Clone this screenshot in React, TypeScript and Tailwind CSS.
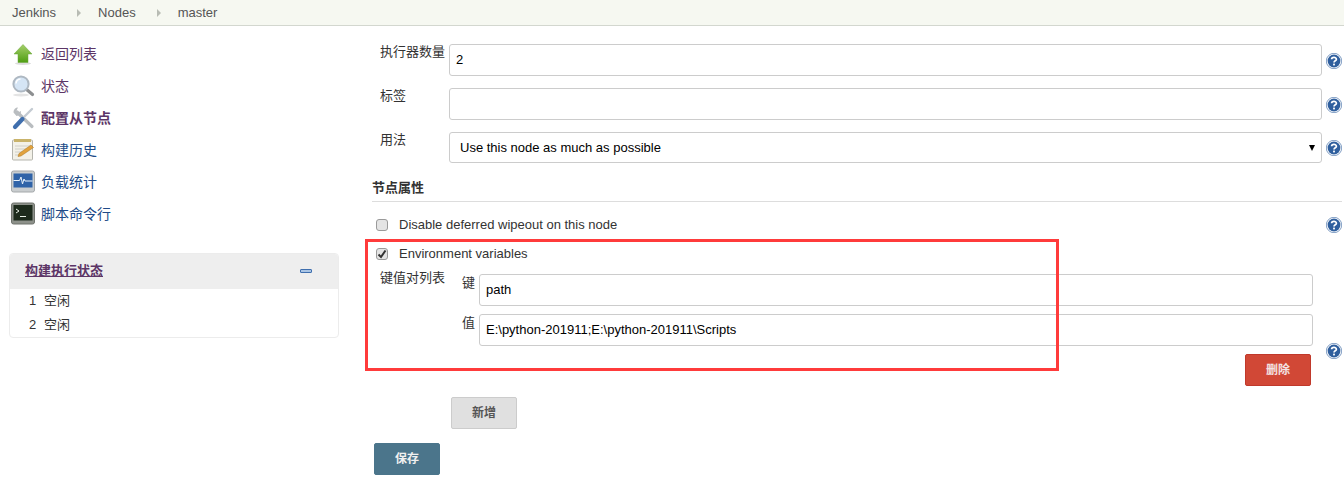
import React from 'react';

const font = { fontFamily: '"Liberation Sans", "Noto Sans CJK SC", sans-serif' };

function ArrowIcon() {
  return (
    <svg width="24" height="24" viewBox="0 0 24 24">
      <defs>
        <linearGradient id="up" x1="0" y1="0" x2="0" y2="1">
          <stop offset="0" stopColor="#a5cf6a" />
          <stop offset="1" stopColor="#4f9e12" />
        </linearGradient>
      </defs>
      <ellipse cx="12" cy="21.5" rx="8" ry="1.5" fill="#dcdcdc" />
      <path d="M12 2.5 L21 12 H17 V20.5 H7 V12 H3 Z" fill="url(#up)" stroke="#6aa63a" strokeWidth="0.5" />
    </svg>
  );
}

function SearchIcon() {
  return (
    <svg width="24" height="24" viewBox="0 0 24 24">
      <ellipse cx="10" cy="21" rx="8" ry="1.5" fill="#e4e4e4" />
      <path d="M15 15 L21.5 20.5" stroke="#8d8f91" strokeWidth="3.2" strokeLinecap="round" />
      <circle cx="10" cy="10" r="7.6" fill="#d5e5f5" stroke="#aeb8c2" strokeWidth="2" />
      <path d="M5 9.5 A5 5 0 0 1 9.5 5" stroke="#ffffff" strokeWidth="1.5" fill="none" />
    </svg>
  );
}

function ToolsIcon() {
  return (
    <svg width="24" height="24" viewBox="0 0 24 24">
      <path d="M6 6 L21 20.5" stroke="#b9bdc0" strokeWidth="3.2" strokeLinecap="round" />
      <path d="M2.5 6.5 A4.5 4.5 0 0 1 7 1.5 L5.5 4.5 L7 6.5 L10 5 A4.5 4.5 0 0 1 5.5 10 Z" fill="#b9bdc0" />
      <path d="M13 11 L21 3" stroke="#c4cbd2" strokeWidth="2.4" strokeLinecap="round" />
      <path d="M4 21 L11.5 13" stroke="#3f6fae" strokeWidth="4.2" strokeLinecap="round" />
    </svg>
  );
}

function NotepadIcon() {
  return (
    <svg width="24" height="24" viewBox="0 0 24 24">
      <rect x="1.5" y="2" width="20" height="20" rx="1" fill="#f3f1e8" stroke="#b5b5ad" />
      <rect x="3" y="1" width="17" height="3" fill="#c9b36a" />
      <path d="M4 8 H19 M4 11 H19 M4 14 H14 M4 17 H10" stroke="#cfcfc8" />
      <path d="M7 18.5 L8 15.5 L20 7 L22.5 9.5 L10 18 Z" fill="#e2a23c" stroke="#a8741e" strokeWidth="0.5" />
    </svg>
  );
}

function MonitorIcon() {
  return (
    <svg width="24" height="24" viewBox="0 0 24 24">
      <rect x="0.5" y="1" width="23" height="21" rx="2" fill="#c9cdcf" stroke="#a4a8aa" />
      <rect x="2.5" y="3.5" width="19" height="14" fill="#2f63a8" />
      <path d="M2.5 10.5 H8.5 L10 7 L11.5 14 L13 9 L14 11 H21.5" stroke="#e8f2fb" strokeWidth="1" fill="none" />
    </svg>
  );
}

function TerminalIcon() {
  return (
    <svg width="24" height="24" viewBox="0 0 24 24">
      <rect x="0.5" y="1" width="23" height="21" rx="2" fill="#8d918a" stroke="#6f736d" />
      <rect x="2.5" y="3" width="19" height="15.5" fill="#1d2b1c" />
      <path d="M5 7 L8 9 L5 11" stroke="#e8f0e6" strokeWidth="1" fill="none" />
      <path d="M9 14.5 H15" stroke="#e8f0e6" strokeWidth="1" />
    </svg>
  );
}

function HelpIcon() {
  return (
    <svg width="16" height="16" viewBox="0 0 16 16" className="shrink-0">
      <circle cx="8" cy="8" r="7.7" fill="#ffffff" stroke="#2f5f9e" strokeWidth="0.6" />
      <circle cx="8" cy="8" r="6.4" fill="#2f5f9e" />
      <path d="M5.6 6.2 C5.6 3.8 10.4 3.8 10.4 6.2 C10.4 7.8 8 7.8 8 9.6" fill="none" stroke="#ffffff" strokeWidth="1.7" />
      <rect x="7.1" y="10.6" width="1.8" height="1.8" fill="#ffffff" />
    </svg>
  );
}

const links = [
  { label: '返回列表', icon: <ArrowIcon />, color: 'text-[#5c3566]' },
  { label: '状态', icon: <SearchIcon />, color: 'text-[#5c3566]' },
  { label: '配置从节点', icon: <ToolsIcon />, color: 'text-[#5c3566] font-bold' },
  { label: '构建历史', icon: <NotepadIcon />, color: 'text-[#204a87]' },
  { label: '负载统计', icon: <MonitorIcon />, color: 'text-[#204a87]' },
  { label: '脚本命令行', icon: <TerminalIcon />, color: 'text-[#204a87]' },
];

function Sidebar() {
  return (
    <div className="w-[372px] shrink-0 pl-[9px] pt-[12px]">
      <div className="flex flex-col">
        {links.map(l => (
          <div key={l.label} className="flex h-[32px] items-center gap-[6px] pl-[2px]">
            {l.icon}
            <span className={`text-[14px] ${l.color}`}>{l.label}</span>
          </div>
        ))}
      </div>
      <div className="mt-[23px] w-[330px] overflow-hidden rounded-[4px] border border-[#ececec]">
        <div className="flex h-[35px] items-center justify-between bg-[#eeeeee] pb-[2px] pl-[15px] pr-[26px]">
          <span className="text-[13px] font-bold text-[#5c3566] underline">构建执行状态</span>
          <span className="h-[4px] w-[12px] rounded-[1px] border border-[#3f6fae] bg-[#a9c4e4]" />
        </div>
        <div className="flex h-[24px] items-center pl-[19px] text-[13px] text-[#333333]">
          <span className="w-[15px]">1</span>
          <span>空闲</span>
        </div>
        <div className="flex h-[24px] items-center pl-[19px] text-[13px] text-[#333333]">
          <span className="w-[15px]">2</span>
          <span>空闲</span>
        </div>
      </div>
    </div>
  );
}

function Field({ label, value, arrow }: { label: string; value?: string; arrow?: boolean }) {
  return (
    <div className="flex items-start">
      <div className="w-[77px] shrink-0 pl-[8px] text-[13px] leading-[15px] text-[#333333]">{label}</div>
      <div className={`flex w-[873px] shrink-0 items-center justify-between rounded-[3px] border border-[#cccccc] bg-white text-[13px] text-black ${arrow ? 'h-[31px] pl-[10px] pr-[6px]' : 'h-[32px] pl-[6px]'}`}>
        <span>{value}</span>
        {arrow && <span className="h-0 w-0 border-x-[3px] border-t-[6px] border-x-transparent border-t-black" />}
      </div>
      <div className={`ml-[4px] flex items-center ${arrow ? 'h-[31px]' : 'h-[32px] pt-[1px]'}`}>
        <HelpIcon />
      </div>
    </div>
  );
}

function Pair({ label, value }: { label: string; value: string }) {
  return (
    <div className="flex items-start">
      <div className="w-[17px] shrink-0 pt-[1px] text-[13px] leading-[15px] text-[#333333]">{label}</div>
      <div className="flex h-[32px] w-[834px] items-center rounded-[3px] border border-[#cccccc] bg-white pl-[6px] text-[13px] text-black">
        {value}
      </div>
    </div>
  );
}

function Main() {
  return (
    <div className="flex-1 pr-[2px] pt-[18px]">
      <div className="flex flex-col gap-[12px]">
        <Field label="执行器数量" value="2" />
        <Field label="标签" />
        <Field label="用法" value="Use this node as much as possible" arrow />
      </div>
      <div className="mt-[16px] border-b border-[#dddddd] pb-[5px] text-[13px] font-bold leading-[17px] text-[#333333]">节点属性</div>
      <div className="mt-[15px] flex h-[16px] items-center pl-[4px]">
        <span className="h-[12px] w-[12px] rounded-[3px] border border-[#9a9a9a] bg-[#e4e4e4]" />
        <span className="ml-[11px] flex-1 text-[13px] text-[#333333]">Disable deferred wipeout on this node</span>
        <HelpIcon />
      </div>
      <div className="mt-[13px] flex h-[16px] items-center pl-[4px]">
        <span className="flex h-[12px] w-[12px] items-center justify-center rounded-[3px] border border-[#9a9a9a] bg-[#e4e4e4]">
          <svg width="10" height="10" viewBox="0 0 10 10">
            <path d="M1.5 5.5 L4 8 L8.5 1.5" fill="none" stroke="#333333" strokeWidth="2" />
          </svg>
        </span>
        <span className="ml-[11px] text-[13px] text-[#333333]">Environment variables</span>
      </div>
      <div className="mt-[12px] flex items-start">
        <div className="-mt-[4px] w-[90px] shrink-0 pl-[8px] text-[13px] leading-[15px] text-[#333333]">键值对列表</div>
        <div className="flex flex-col gap-[8px]">
          <Pair label="键" value="path" />
          <Pair label="值" value="E:\python-201911;E:\python-201911\Scripts" />
          <div className="flex">
            <div className="w-[783px] shrink-0" />
            <div className="flex h-[32px] w-[66px] items-center justify-center rounded-[2px] border border-[#c0392b] bg-[#d14836] text-[12px] font-bold text-[#f3e3e3]">删除</div>
            <div className="ml-[15px] -mt-[11px] h-[16px]">
              <HelpIcon />
            </div>
          </div>
        </div>
      </div>
      <div className="ml-[79px] mt-[11px] flex h-[32px] w-[66px] items-center justify-center rounded-[2px] border border-[#cccccc] bg-[#e0e0e0] text-[12px] font-bold text-[#555555]">新增</div>
      <div className="ml-[2px] mt-[14px] flex h-[32px] w-[66px] items-center justify-center rounded-[2px] border border-[#4b758b] bg-[#4b758b] text-[12px] font-bold text-[#f0f0f0]">保存</div>
    </div>
  );
}

export default function App() {
  return (
    <div className="relative h-[484px] w-[1344px] overflow-hidden bg-white" style={font}>
      {/* breadcrumb bar */}
      <div className="flex h-[26px] items-center border-b border-[#d3d7cf] bg-[#f6f8f1] pl-[12px] text-[13px] text-[#555555]">
        <span>Jenkins</span>
        <span className="ml-[21px] mr-[17px] h-0 w-0 border-y-[4px] border-l-[4px] border-y-transparent border-l-[#b8bcb4]" />
        <span>Nodes</span>
        <span className="ml-[21px] mr-[17px] h-0 w-0 border-y-[4px] border-l-[4px] border-y-transparent border-l-[#b8bcb4]" />
        <span>master</span>
      </div>
      <div className="flex">
        <Sidebar />
        <Main />
      </div>
      {/* red annotation drawn over the screenshot */}
      <div className="pointer-events-none absolute left-[365px] top-[239px] h-[132px] w-[694px] border-[3px] border-[#ff3b3b]" />
    </div>
  );
}
